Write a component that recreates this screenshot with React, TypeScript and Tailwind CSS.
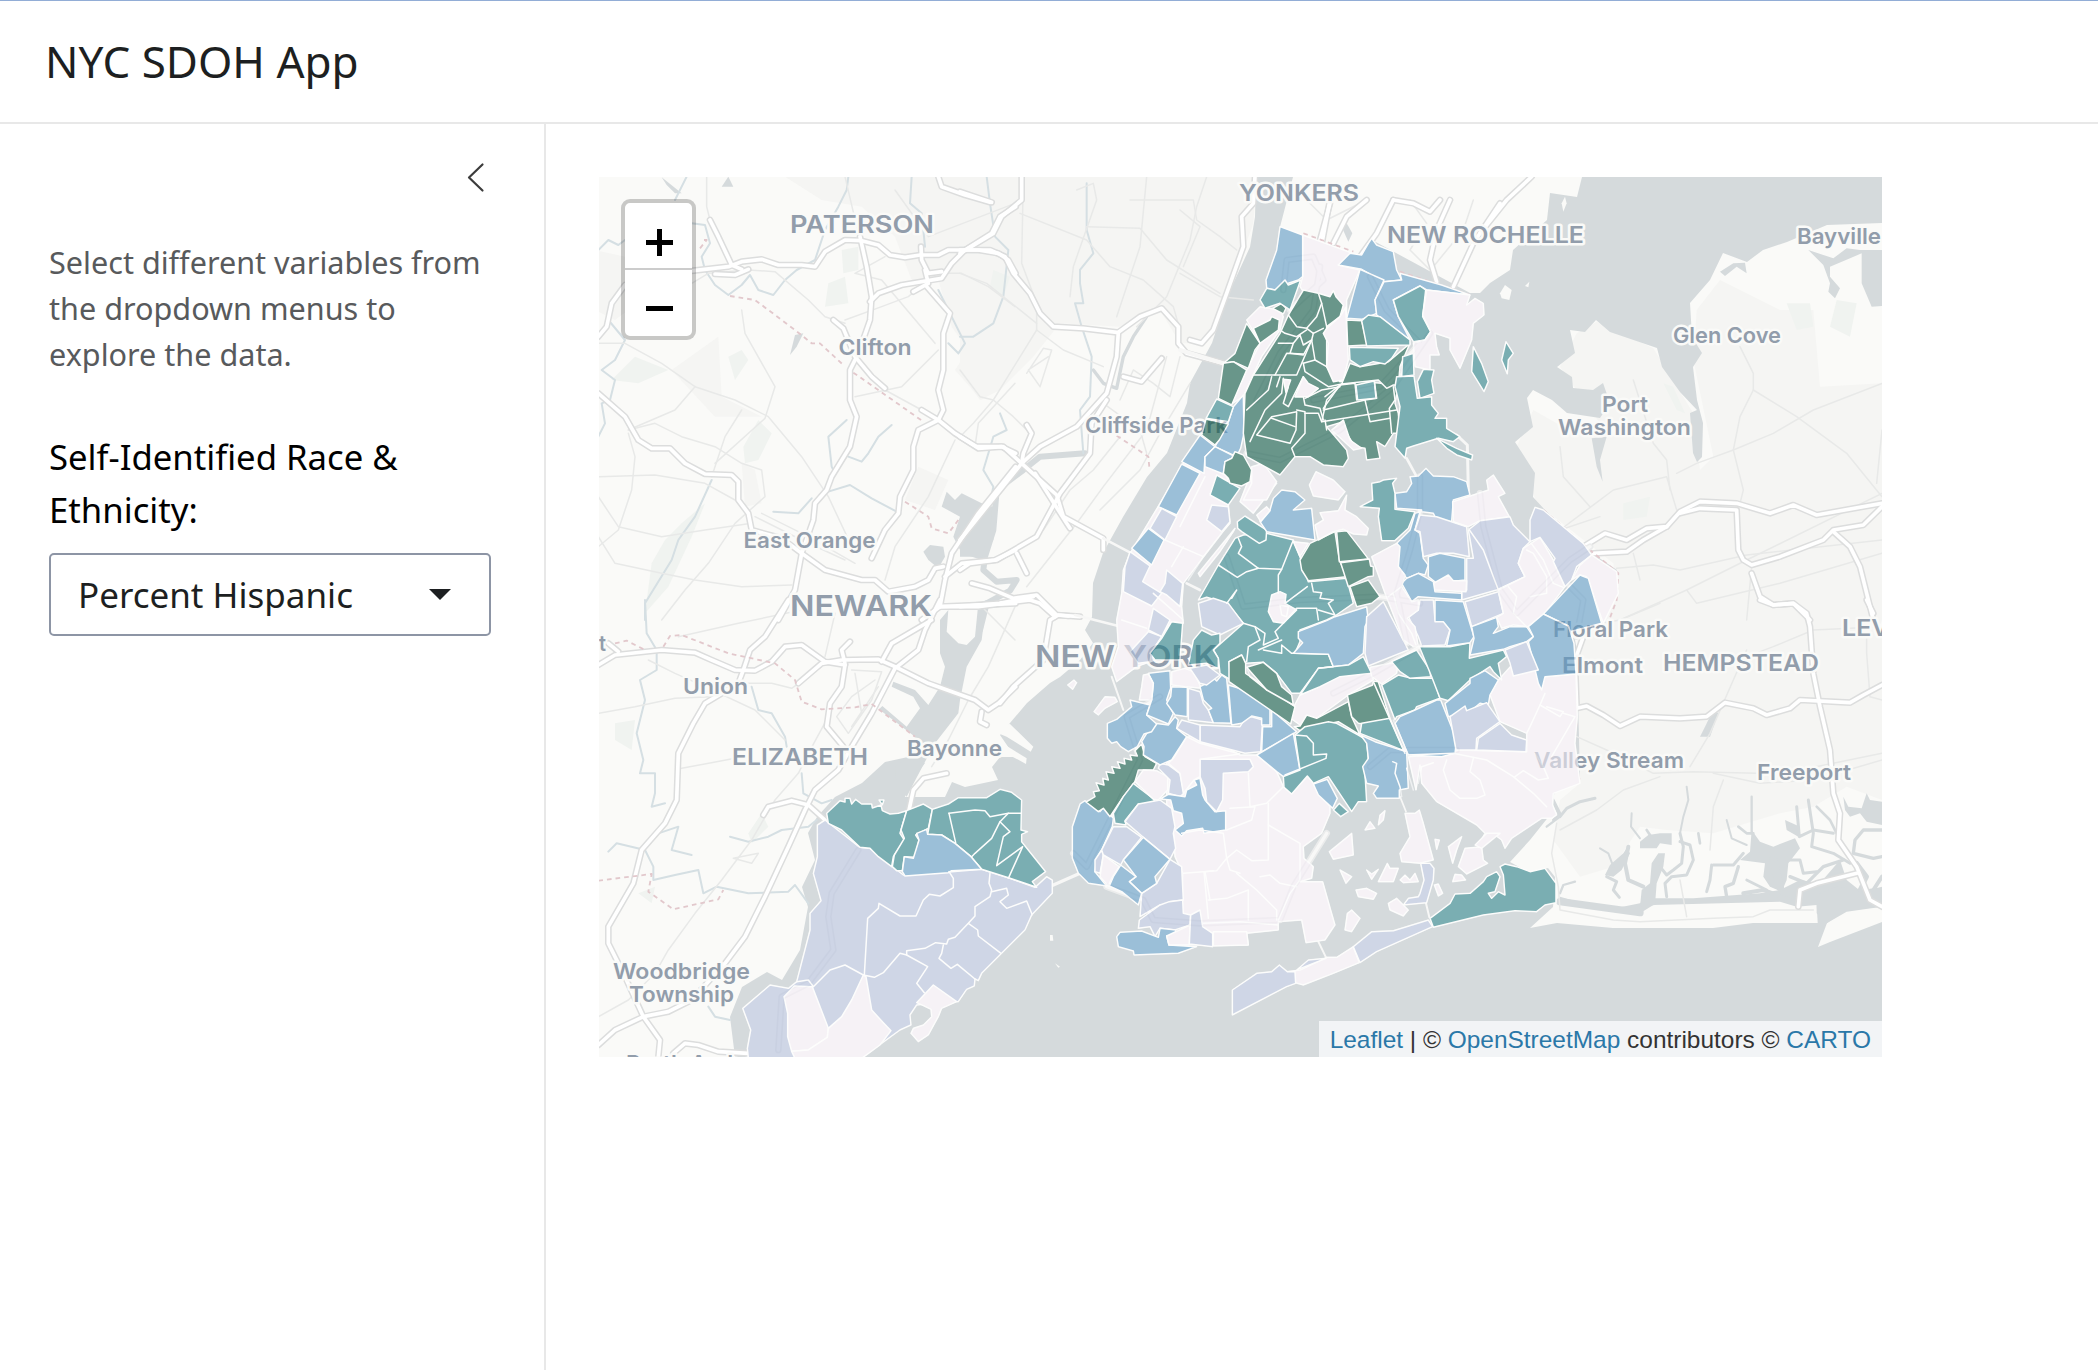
import React from "react";

type Tone = "p" | "l" | "b" | "t" | "g";

// The map is split into survey sheets; each sheet has its own origin and uses thirds of a pixel.
const SHEETS: Record<string, [number, number]> = {
  A: [595, 170],
  B: [595, 600],
  C: [1000, 600],
  D: [1180, 200],
  E: [1100, 460],
  F: [1370, 450],
  G: [1300, 680],
  H: [1480, 170],
  I: [1480, 600],
  K: [960, 170],
};

const TONES: Record<Tone, string> = {
  p: "#f3edf6",
  l: "#b3bfdb",
  b: "#5c98c4",
  t: "#257c84",
  g: "#095441",
};

const REGIONS: [string, Tone, string][] = [
  // Staten Island
  ["B", "l", "667,675 690,660 795,742 825,745 925,825 1070,815 1160,808 1245,835 1320,862 1355,830 1372,840 1372,880 1310,945 1290,990 1220,1060 1160,1120 1150,1142 1140,1137 1138,1158 1115,1168 1090,1205 1060,1205 965,1215 945,1245 948,1275 915,1290 860,1330 800,1375 460,1375 457,1345 467,1290 443,1225 525,1155 580,1165 605,1145 645,990 645,940 678,902 655,820 667,770"],
  ["B", "p", "567,1190 598,1158 652,1160 700,1285 697,1312 640,1350 590,1354 578,1310 578,1240"],
  ["B", "p", "700,1285 740,1250 770,1200 805,1125 813,1130 830,1230 865,1268 888,1292 855,1335 800,1375 600,1375 590,1354 640,1350 697,1312"],
  ["B", "p", "965,1208 1015,1155 1085,1205 1040,1225 1030,1250 1000,1305 970,1325 948,1300 955,1285 985,1275 1010,1250 1008,1228 985,1217"],
  ["B", "t", "695,640 735,602 750,606 750,595 765,595 770,612 782,598 800,612 830,612 832,624 858,615 862,632 885,642 910,640 935,632 915,700 928,720 895,770 890,800 850,770 825,745 795,742 740,690 700,670"],
  ["B", "t", "935,632 985,612 1012,628 1000,685 962,705 972,720 960,772 928,770 922,812 905,812 892,800 898,765 928,715 918,690"],
  ["B", "t", "1012,628 1060,612 1090,593 1175,593 1215,568 1250,577 1280,600 1278,690 1298,695 1280,703 1280,725 1352,815 1312,845 1325,862 1245,835 1160,808 1128,770 1080,730 1040,705 998,703"],
  ["B", "b", "928,770 955,775 972,720 965,700 995,688 998,703 1040,705 1080,730 1128,770 1160,808 1070,812 1060,818 930,828 922,815"],
  ["B", "t", "852,600 867,600 862,615"],
  // Brooklyn
  ["C", "p", "500,480 545,420 600,395 720,465 770,465 830,515 850,560 875,580 925,525 945,545 990,620 990,640 965,700 910,740 912,775 940,800 935,835 900,845 968,845 992,930 1005,975 975,1020 918,1028 905,960 835,965 835,990 740,1000 745,1035 500,1035 497,1005 545,1000 545,940 548,820 525,770 520,700 500,620"],
  ["C", "b", "240,612 255,602 300,635 310,622 340,655 337,680 305,750 290,775 285,815 320,858 265,850 235,820 217,775 217,680"],
  ["C", "l", "305,750 285,780 285,815 300,820 310,765"],
  ["C", "g", "258,606 285,590 280,575 298,572 288,548 312,555 308,535 325,540 318,515 342,520 335,500 360,505 352,485 375,492 372,475 395,480 390,465 412,468 405,452 425,432 435,470 470,490 460,510 415,510 405,545 370,590 330,650 310,625 295,635"],
  ["C", "t", "400,550 465,600 440,620 415,612 375,662 378,675 345,670 340,640 370,590"],
  ["C", "p", "405,545 430,510 470,512 503,530 503,570 475,600 460,598"],
  ["C", "l", "480,490 505,495 540,520 552,580 540,590 505,580 510,540 475,505"],
  ["C", "l", "415,612 480,600 515,625 525,680 520,700 527,745 510,778 430,712 375,665"],
  ["C", "l", "340,680 380,680 425,712 370,780 362,795 310,765 305,750"],
  ["C", "p", "310,765 358,800 335,835 325,858 300,830"],
  ["C", "l", "510,778 545,800 550,900 508,905 505,915 480,915 420,950 425,880 470,850"],
  ["C", "b", "430,712 510,778 465,830 470,850 425,880 388,845 408,830 370,780"],
  ["C", "b", "362,795 408,830 388,845 425,880 415,915 365,875 328,858 340,830"],
  ["C", "l", "508,905 548,900 550,940 572,945 570,975 525,990 480,985 465,1010 450,980 415,985 418,960 480,915"],
  ["C", "b", "350,1010 360,997 425,993 475,1012 480,985 528,990 525,1005 500,1008 507,1035 590,1040 535,1060 402,1065 400,1053 355,1040"],
  ["C", "p", "500,1008 570,975 568,1035 507,1035"],
  ["C", "l", "572,945 600,930 608,980 638,1000 638,1040 568,1032"],
  ["C", "p", "640,995 740,995 745,1035 640,1038"],
  ["C", "b", "600,535 608,585 615,600 645,635 677,632 677,690 612,700 608,685 560,692 545,708 525,690 550,670 545,640 520,632 512,600 480,597 505,583 555,590 560,570 590,555 582,540"],
  ["C", "l", "600,478 750,478 760,500 745,515 670,520 668,600 650,635 620,605 615,565 600,530"],
  ["C", "p", "560,410 600,430 720,462 600,478 600,530 582,540 550,580 540,520 505,490 520,475"],
  ["C", "l", "600,375 720,380 735,355 755,350 788,360 782,455 735,460 600,425"],
  ["C", "l", "545,360 600,375 600,425 530,385"],
  ["C", "b", "465,370 505,375 525,350 535,360 530,385 560,410 515,480 480,495 430,465 432,440 425,425 440,400"],
  ["C", "b", "322,370 350,358 395,320 390,300 450,315 440,345 470,372 455,395 432,402 412,440 385,455 362,440 350,425 335,430 322,415"],
  ["C", "b", "445,220 510,212 512,265 500,300 520,340 505,372 440,345 455,300 460,250"],
  ["C", "b", "515,260 562,262 562,350 525,345 500,310 512,290"],
  ["C", "p", "430,225 445,222 460,250 455,300 418,300 425,260"],
  ["C", "p", "282,335 315,290 345,292 352,305 315,325 295,345"],
  ["C", "p", "203,255 222,240 230,248 218,268"],
  ["C", "p", "515,215 555,205 580,215 605,265 555,260 515,255"],
  ["C", "l", "565,265 600,275 610,310 625,330 640,368 565,360"],
  ["C", "b", "600,260 620,250 635,228 650,243 665,225 680,235 693,370 640,368 625,330 635,325 610,300"],
  ["C", "l", "570,205 620,195 660,225 640,240 620,255 600,250"],
  ["C", "b", "685,255 735,270 810,325 810,375 785,375 785,355 755,348 725,370 695,375"],
  ["C", "b", "815,330 890,395 875,405 770,465 785,455 788,380 815,380"],
  ["C", "b", "770,465 880,400 900,510 850,530 830,515"],
  // Western Queens
  ["E", "t", "355,315 405,235 430,225 500,220 580,240 600,290 625,365 740,355 760,430 705,468 680,480 600,510 600,545 585,580 685,583 700,620 655,625 600,700 575,700 530,640 490,607 437,610 425,585 387,605 392,660 360,640 355,595 340,570 430,490 380,430 320,412 295,420"],
  ["E", "t", "412,185 435,168 500,210 498,240 478,250 425,215 413,205"],
  ["E", "p", "515,405 540,395 558,403 555,430 590,450 550,490 520,485 505,455"],
  ["E", "p", "540,435 565,440 560,470 545,465"],
  ["E", "l", "295,430 340,415 385,430 430,490 360,525 305,500"],
  ["E", "t", "280,540 305,510 335,525 360,520 360,550 340,570 355,595 355,625 320,610 265,615"],
  ["E", "p", "580,245 625,250 600,290"],
  ["E", "g", "600,300 630,250 705,215 718,300 740,350 625,362 605,330"],
  ["E", "g", "710,215 740,212 800,290 805,297 718,305"],
  ["E", "g", "722,308 808,297 812,318 820,320 820,348 805,350 745,380"],
  ["E", "g", "750,380 805,360 840,410 815,430 770,440"],
  ["E", "b", "480,185 510,150 520,115 545,90 585,95 615,120 580,150 635,145 645,240 500,215"],
  ["E", "p", "645,195 670,180 660,158 715,152 740,105 735,150 770,170 805,205 800,225 760,222 730,208 700,215 655,240"],
  ["E", "p", "628,75 648,35 700,60 735,95 715,120 640,108"],
  ["E", "p", "470,165 500,140 510,152 482,185"],
  ["E", "b", "595,515 680,482 705,470 800,440 805,480 795,500 790,580 745,615 700,620 685,583 580,580 608,548 595,535"],
  ["E", "l", "800,470 850,425 925,570 805,618 795,580"],
  ["E", "p", "600,705 660,680 720,648 815,635 820,660 745,705 650,775 600,795 565,770"],
  ["E", "t", "655,625 745,615 790,590 815,640 720,650 660,680 600,705"],
  ["E", "g", "387,605 425,585 437,610 437,640 585,740 572,792 387,665"],
  ["E", "g", "440,622 490,607 530,640 545,680 575,705 580,735 500,690"],
  ["E", "g", "582,800 600,798 620,765 650,775 745,725 755,770 780,825 715,785 640,800 600,812"],
  ["E", "g", "742,705 818,675 820,663 835,665 870,775 810,795 775,790 755,770"],
  ["E", "p", "810,622 895,605 890,640 845,672 815,650"],
  ["G", "t", "-15,165 15,140 85,125 110,130 175,165 200,180 205,235 195,280 200,365 175,365 155,395 85,290 40,310 22,288 -25,342 -48,322 -50,290 0,270"],
  ["G", "b", "40,312 82,298 112,355 98,385 55,345"],
  ["G", "t", "100,390 118,370 145,395 122,410"],
  ["G", "t", "180,160 185,130 270,115 312,212"],
  ["G", "b", "182,165 225,185 320,215 325,325 298,330 298,355 230,355 220,340 235,318 200,310 188,260 205,235 200,190"],
  ["F", "p", "360,735 385,690 430,640 500,660 520,680 618,672 622,800 615,880 630,1000 550,1030 548,1065 560,1095 545,1105 515,1105 425,1165 405,1195 395,1170 375,1155 355,1175 325,1185 345,1150 320,1125 200,1055 155,1000 150,945 138,1020 115,920 255,910 258,900 470,905 470,850 390,815"],
  ["F", "t", "35,705 85,675 125,685 190,685 210,745 140,770 135,780 80,800 75,810"],
  ["F", "t", "65,635 140,600 180,660 182,680 120,685 90,665"],
  ["F", "t", "148,590 240,590 300,578 298,625 400,600 410,620 385,640 395,690 370,665 360,650 300,690 235,752 210,745 185,680"],
  ["F", "b", "225,760 300,700 300,685 345,662 385,690 360,735 355,765 330,760 300,785 235,800"],
  ["F", "b", "75,820 90,800 135,780 200,750 212,750 260,870 255,910 215,920 115,915"],
  ["F", "l", "240,800 285,768 290,782 350,758 390,815 320,865 318,900 258,900"],
  ["F", "l", "390,820 425,855 470,870 468,905 320,900 325,865"],
  // Eastern Queens
  ["F", "b", "75,130 110,125 125,100 120,80 145,78 168,55 190,78 250,80 290,95 300,135 250,150 245,215 200,210 190,190 155,185 155,180 80,175"],
  ["F", "t", "5,100 30,95 40,90 80,85 68,100 75,130 75,178 135,185 115,235 75,272 35,272 25,200 28,175 -30,170 8,150"],
  ["F", "b", "150,185 135,240 150,250 160,325 175,345 165,375 145,370 110,385 85,350 80,280 120,240 135,190"],
  ["F", "l", "150,195 200,200 290,230 298,320 250,310 200,310 160,320 150,245 135,240"],
  ["F", "p", "248,155 355,120 350,90 370,75 405,130 385,140 418,200 330,212 295,230 250,215"],
  ["F", "l", "295,240 330,212 420,200 430,225 480,275 460,295 445,340 465,380 380,420 275,450 275,425 290,420 290,325 310,325"],
  ["F", "b", "175,320 210,310 285,325 285,390 200,400 175,380"],
  ["F", "p", "190,400 235,375 250,392 290,392 288,425 190,420"],
  ["F", "b", "95,400 110,385 145,370 190,395 195,425 275,430 275,450 145,440 125,455"],
  ["F", "l", "285,455 385,425 400,490 305,530"],
  ["F", "l", "115,500 145,480 150,450 190,450 195,510 225,515 240,540 225,585 155,588 145,560"],
  ["F", "b", "195,450 280,455 312,560 300,578 230,588 240,540 220,515 195,515"],
  ["F", "b", "305,530 380,502 385,530 370,550 420,530 470,530 490,560 470,575 420,590 400,598 300,615 312,565"],
  ["F", "p", "5,320 80,280 90,290 85,350 105,375 95,410 125,455 145,450 145,480 112,505 135,530 145,590 130,590 100,570 45,430"],
  ["F", "p", "385,420 465,380 445,340 460,295 510,262 550,330 585,410 525,490 475,530 430,525 395,535 380,502 400,490"],
  ["F", "l", "495,172 520,180 640,280 665,315 620,350 605,390 585,410 550,335 555,325 510,262 480,275 480,210"],
  ["F", "p", "665,315 740,365 745,430 700,520 650,380 630,375 605,390 630,345"],
  ["F", "b", "630,375 655,385 695,520 600,545 595,528 520,492"],
  ["F", "b", "520,492 595,528 612,580 618,672 525,680 515,720 505,700 475,575 490,560 475,530"],
  ["F", "l", "405,600 470,575 505,660 430,678 420,640"],
  // Manhattan
  ["E", "p", "255,0 370,0 385,70 330,100 385,135 390,190 365,220 250,370 245,440 250,490 215,485 150,580 165,600 110,620 50,665 35,620 55,560 50,480 65,400 70,330 90,280 180,130"],
  ["E", "b", "245,12 300,40 230,165 175,140"],
  ["E", "l", "185,145 230,170 195,240 150,205"],
  ["E", "b", "145,205 192,240 155,315 95,265"],
  ["E", "l", "90,275 150,318 128,365 185,400 155,438 70,395 75,320"],
  ["E", "l", "200,330 248,370 240,440 200,405 180,395 195,370"],
  ["E", "l", "160,445 210,480 185,530 145,510"],
  ["E", "l", "145,515 185,530 155,575 150,605 115,610 90,575"],
  ["E", "t", "215,485 248,490 240,600 165,600 150,580 185,535"],
  ["E", "l", "335,135 385,140 390,185 365,215 320,180"],
  ["E", "p", "455,35 480,20 530,70 460,160 420,125"],
  ["E", "p", "295,340 405,205 400,215 360,275 300,350"],
  ["D", "p", "200,360 240,320 300,330 310,350 300,390 245,470 190,590 155,612 200,510 240,430"],
  ["D", "g", "220,385 270,360 275,350 298,360 295,390 240,430"],
  ["D", "g", "200,370 240,430 225,450 205,505 160,485 130,490 165,460"],
  ["D", "g", "130,490 160,485 200,510 155,615 115,595"],
  ["D", "g", "278,325 305,310 318,325 310,342"],
  ["D", "b", "190,585 192,700 182,745 170,770 105,740 145,665 160,620"],
  ["D", "t", "110,597 160,620 145,665 78,655"],
  ["D", "g", "78,657 145,672 118,720 105,735 65,705"],
  ["D", "b", "60,705 105,740 75,770 72,820 5,785"],
  ["D", "b", "105,740 165,770 135,785 130,822 75,800 75,770"],
  ["E", "t", "350,45 420,85 385,135 330,105"],
  ["D", "g", "165,755 190,765 215,810 210,845 185,858 150,850 145,835 130,820 135,785 155,775"],
  ["D", "p", "215,800 250,790 290,845 260,900 190,900 215,850"],
  // Bronx
  ["D", "p", "368,105 545,170 475,195 540,210 500,300 500,480 490,540 460,545 440,500 445,430 440,385 360,260 368,230"],
  ["D", "b", "300,80 368,105 368,230 355,240 325,250 285,270 260,265 258,240 290,150"],
  ["D", "t", "260,265 285,270 315,240 325,255 362,240 330,330 300,310 255,325 240,300"],
  ["D", "b", "475,195 510,160 545,165 565,130 575,115 590,135 640,155 650,210 665,240 610,245 545,208"],
  ["D", "b", "540,208 612,240 585,300 590,340 545,358 500,355"],
  ["D", "b", "612,245 665,240 660,220 785,255 870,285 740,270 720,258 640,300 655,350 690,420 590,345 585,300"],
  ["D", "t", "640,300 720,258 737,270 728,350 752,395 735,420 700,425 655,350"],
  ["D", "p", "740,270 870,285 860,315 885,295 910,310 912,345 880,370 875,420 840,505 810,450 810,415 765,400 770,440 778,465 750,465 750,510 705,500 700,428 735,420 752,395 728,345"],
  ["D", "g", "325,345 370,270 415,280 450,290 460,272 468,290 490,315 480,350 440,380 440,500 480,545 505,540 655,555 645,610 655,640 660,700 640,700 615,740 590,725 600,775 560,780 555,745 525,740 500,700 490,665 440,680 500,750 505,775 490,800 430,795 390,770 345,770 300,825 200,770 190,700 195,580 220,525 300,400"],
  ["D", "p", "430,400 440,385 480,350 497,322 505,480 490,540 460,545 440,500 445,430"],
  ["D", "p", "370,530 385,550 415,565 385,590 345,590"],
  ["D", "p", "310,538 332,540 318,578"],
  ["D", "p", "455,690 490,660 510,720 545,745 520,750"],
  ["D", "g", "500,360 545,362 562,435 503,438"],
  ["D", "g", "510,490 540,500 625,485 690,430 660,500 655,555 640,555 620,565 595,540 485,552"],
  ["D", "t", "545,362 565,345 600,350 690,420 690,435 560,438"],
  ["D", "t", "508,442 655,445 635,475 615,492 580,485 540,500 510,480"],
  ["D", "t", "668,470 700,460 702,525 665,530"],
  ["D", "t", "712,545 730,508 762,510 755,540 762,580 720,595"],
  ["D", "t", "650,530 702,528 712,595 755,590 755,615 775,640 765,655 800,655 800,685 840,710 820,725 775,715 700,738 680,745 675,775 645,740 660,620 645,560"],
  ["D", "t", "770,715 830,745 878,765 875,780 830,765 800,745"],
  ["D", "t", "880,440 905,490 925,545 912,575 875,515"],
  ["D", "t", "528,555 583,543 588,595 533,600"],
  ["H", "t", "78,515 100,550 85,570 82,612 65,570"],
  // Rockaways and Jamaica Bay
  ["G", "t", "390,715 450,670 465,642 510,640 550,605 560,590 590,575 600,590 585,635 565,640 575,655 595,635 615,645 610,585 600,560 615,552 650,560 690,575 735,565 768,610 768,668 735,675 710,695 645,692 550,705 400,742"],
  ["G", "p", "0,870 80,832 110,832 160,800 178,848 100,880 10,915 -45,900 -40,875"],
  ["G", "l", "160,800 215,755 280,752 385,720 398,740 230,815 180,848"],
  ["C", "l", "697,1170 770,1120 815,1115 838,1095 862,1115 885,1115 887,1150 860,1160 697,1245"],
  ["C", "l", "890,1110 925,1080 978,1075"],
  ["G", "p", "315,400 345,400 358,390 370,430 400,540 360,550 305,545 300,520 330,470"],
  ["G", "l", "362,550 390,550 402,565 400,600 380,668 310,675 325,655 355,650 360,640 372,600"],
  ["G", "p", "88,515 155,460 160,525 100,538"],
  ["G", "p", "475,560 495,505 545,500 550,540 563,550 500,582"],
  ["G", "p", "525,495 560,460 600,460 545,505"],
  ["G", "p", "168,630 200,625 230,640 220,658 175,650"],
  ["G", "p", "135,750 142,700 155,690 180,715 155,755"],
  ["G", "p", "265,670 290,655 325,690 310,708 270,690"],
  ["G", "p", "445,500 485,470 470,510 458,550"],
  ["G", "p", "235,605 262,550 270,565 295,565 280,605"],
  ["G", "p", "300,600 315,585 330,600 345,580 355,605 310,608"],
  ["G", "p", "200,570 215,582 235,568 215,598"],
  ["G", "p", "120,570 155,590 138,610"],
  ["G", "p", "195,450 210,425 225,445"],
  ["G", "p", "235,435 240,405 255,392 250,420"],
  ["G", "p", "458,605 465,583 485,585 497,600"],
  ["G", "p", "403,615 415,612 428,640 415,648"],
  ["G", "p", "405,478 418,480 410,508"],
];

// Interior tract borders
const BORDERS: [string, string][] = [
  ["B", "605,1145 640,1140 655,1160 705,1110 750,1095 805,1125"],
  ["B", "808,1125 818,955 850,925 852,910 915,948 963,948 985,900 1003,883 1035,888 1075,863 1075,835 1062,815"],
  ["B", "805,1125 838,1132 865,1118 915,1060 935,1065 998,1100 965,1150 988,1178"],
  ["B", "935,1065 935,1052 990,1045 1022,1028 1055,1032 1060,1018 1080,1012 1120,970 1140,948 1140,920 1185,890 1190,870 1182,850 1185,820"],
  ["B", "1045,1035 1040,1060 1032,1075 1068,1105 1087,1093 1140,1137"],
  ["B", "1120,970 1148,990 1150,1008 1218,1060"],
  ["B", "1190,875 1235,865 1240,885 1215,905 1235,925 1295,903 1312,945"],
  ["B", "1062,640 1140,630 1170,632 1185,650 1240,640 1278,640"],
  ["B", "1062,640 1082,728"],
  ["B", "1240,640 1215,665 1190,715 1140,760 1130,770"],
  ["B", "1215,665 1245,695 1225,710 1205,797 1283,740 1240,835"],
  ["C", "545,700 600,690 670,700 680,775 650,812 550,820"],
  ["C", "612,815 625,955"],
  ["C", "680,690 755,660 765,620 690,625"],
  ["C", "745,520 750,620 800,610 850,560"],
  ["C", "805,610 805,780 755,782 710,750 680,775 690,810 720,820"],
  ["C", "805,675 900,730 900,840 870,880 835,960"],
  ["C", "710,820 770,870 830,930 830,960"],
  ["C", "780,830 810,825 840,850 890,860"],
  ["C", "625,900 680,895 745,870 745,960"],
  ["C", "610,970 720,965 835,975"],
  ["C", "630,900 615,815 640,812"],
  ["E", "195,240 310,290 365,220"],
  ["E", "250,260 215,320"],
  ["E", "315,50 240,200"],
  ["E", "65,480 140,505"],
  ["E", "310,290 265,360"],
  ["E", "160,400 205,440 250,480"],
  ["E", "415,235 425,260 415,280 475,325 545,328 580,240"],
  ["E", "355,315 412,352 440,335 475,325"],
  ["E", "545,328 535,345 535,400"],
  ["E", "555,430 622,380"],
  ["E", "380,430 410,390 395,415"],
  ["E", "430,490 465,500 480,540 445,560 440,605"],
  ["E", "465,500 495,520 490,555 535,535 525,515 550,490 590,445 650,445 655,480"],
  ["E", "635,370 640,395 665,398 660,415 700,420 685,430 705,465 655,450"],
  ["E", "490,570 545,580 545,555 575,580 585,580"],
  ["E", "475,570 545,540"],
  ["E", "655,625 700,620"],
  ["E", "500,690 450,650 440,622"],
  ["E", "820,665 915,880"],
  ["G", "-15,165 20,168 40,190 40,225 80,222 78,235 -45,285"],
  ["G", "280,120 325,228"],
  ["G", "278,245 290,250 285,280 300,320 305,350"],
  ["G", "320,265 340,330"],
  ["G", "355,310 365,260 400,248"],
  ["G", "440,240 430,270 450,330 480,355 530,355 555,345 540,300 510,275 520,235"],
  ["G", "320,225 460,220 560,240 640,290 700,340 740,380"],
  ["G", "645,290 670,272 715,300 745,295 730,260 705,220"],
  ["F", "525,730 510,765 480,830 470,850"],
  ["F", "510,765 570,800 580,785 530,770"],
  ["F", "580,790 615,800 545,920"],
  ["F", "415,410 440,440 430,490 470,530"],
  ["F", "480,440 530,430 530,380 490,310 470,300"],
  ["F", "480,275 520,330 550,400 580,412"],
  ["F", "295,235 340,300 385,420"],
  ["F", "55,440 95,410"],
  ["F", "70,430 85,490 125,550 140,590"],
  ["D", "325,345 350,380 380,385 410,350 425,310 415,280"],
  ["D", "425,310 440,380"],
  ["D", "380,385 400,400 430,385"],
  ["D", "300,390 315,400 350,410 380,390"],
  ["D", "295,430 340,430 360,405 370,435 395,420 400,400"],
  ["D", "340,430 330,460 370,465 395,420"],
  ["D", "220,525 350,525 395,420"],
  ["D", "285,525 320,460 370,462"],
  ["D", "395,420 405,480 440,500"],
  ["D", "370,490 405,480"],
  ["D", "370,490 375,515 445,560 485,552"],
  ["D", "275,530 265,570 200,630"],
  ["D", "310,535 305,580 255,630 210,725"],
  ["D", "290,560 300,530"],
  ["D", "370,530 325,620 310,610 325,560"],
  ["D", "345,590 370,590 375,615 420,625 430,660"],
  ["D", "230,705 275,650 350,635 348,690 330,730 230,705"],
  ["D", "275,655 345,680"],
  ["D", "350,630 375,635 375,700 335,745 345,770"],
  ["D", "375,640 415,640 425,665 650,630"],
  ["D", "430,625 480,555 525,550 530,600"],
  ["D", "430,630 555,600 570,665 630,655"],
  ["D", "435,590 480,555"],
  ["D", "425,665 440,600 485,552"],
  ["D", "435,660 440,690"],
  ["D", "640,560 645,600 628,625 635,700"],
  ["D", "583,543 590,595 555,600"],
  ["D", "375,595 425,570 480,560"],
];

const URBAN: [string, string][] = [
  ["A", "570,20 1260,20 1260,560 1160,690 1080,600 1120,540 1070,470 1030,330 950,330 900,200 800,110 680,90"],
  ["K", "0,20 890,20 880,160 830,300 780,440 740,520 660,520 600,420 480,470 300,460 220,560 120,660 60,690 0,610"],
  ["A", "230,600 370,500 380,680 500,740 360,740"],
  ["A", "0,240 90,260 100,420 60,450 0,420"],
  ["A", "970,890 1060,930 1020,1020 930,990"],
  ["A", "440,880 480,900 500,1000 450,1010"],
  ["H", "240,590 290,490 350,455 520,535 640,730 660,900 700,860 640,570 650,420 720,330 900,420 1000,420 1020,650 1206,640 1206,1350 420,1350 400,1180 170,1000 110,830 160,720 230,760 360,760"],
  ["I", "290,0 1206,0 1206,600 1100,560 1000,620 900,640 700,700 560,690 480,680 400,800 300,830 220,720 240,600 300,550"],
];

const WATER: [string, string][] = [
  ["B", "1060,30 1035,60 1035,160 1050,200 1035,260 1000,315 960,270 895,245 890,260 955,290 975,325 935,380 862,318 852,328 960,410 940,470 900,500 905,560 935,590 990,485 1020,430 1090,340 1095,300 1115,200 1160,120 1170,40 1175,0 1150,10 1140,110 1115,135 1090,130 1055,95"],
  ["A", "1040,1010 1055,965 1080,990 1100,970 1160,1000 1185,1010 1180,1140 1160,1170 1100,1150 1075,1100 1095,1040"],
  ["A", "985,1145 1005,1125 1045,1130 1050,1160 1030,1195 1000,1170"],
  ["K", "0,975 30,990 60,1000 100,1010 100,1110 60,1160 0,1160"],
  ["H", "1206,240 1140,240 1100,235 1060,265 985,240 1030,285 1050,340 1045,365 1065,385 1080,355 1050,320 1050,290 1145,250 1145,340 1175,410 1206,408"],
  ["H", "335,805 380,800 360,870 368,935 350,890"],
  ["H", "720,305 760,280 795,278 800,310 770,290 735,318"],
  ["A", "585,555 600,495 625,490 605,530"],
  ["A", "200,22 260,70 240,70 215,45"],
  ["A", "380,50 400,20 415,50"],
  ["I", "240,905 480,940 520,915 900,905 950,920 1010,915 1010,940 1040,970 1100,930 1206,920 1206,860 1150,880 1100,840 1080,780 1020,850 960,840 900,870 840,880 640,895 500,895 480,910 380,930 240,890"],
  ["I", "815,690 840,725 880,740 945,715 960,745 925,790 920,840 905,875 870,860 850,830 855,790 780,780 810,755"],
  ["I", "1090,590 1105,620 1145,625 1160,580 1170,600 1206,605 1206,675 1160,665 1140,640 1110,650 1095,630"],
  ["I", "480,725 505,705 540,700 575,700 575,735 540,730 530,745 480,745"],
  ["I", "660,410 700,330 715,340 690,410"],
  ["I", "375,825 390,795 430,760 440,745 450,760 425,810 400,830"],
  ["I", "480,920 485,870 510,850 515,790 535,760 555,760 550,800 530,850 525,915"],
  ["I", "1010,915 1020,880 1070,860 1140,870 1206,862 1206,920 1100,935 1040,970 1015,1000"],
  ["I", "915,660 960,680 955,710 920,690"],
  ["D", "487,85 500,70 517,100 505,125"],
];

const INLETS: [string, string, number][] = [
  ["K", "375,850 240,860 190,900 110,960 100,1080 75,1160 70,1200 110,1235 170,1230 150,1262 80,1300 60,1380", 18],
  ["K", "560,440 520,500 490,560 470,655 430,640 400,600", 10],
  ["I", "240,905 480,938", 22],
  ["I", "455,640 453,680 480,715", 6],
  ["I", "445,740 435,790 445,840 490,860", 12],
  ["I", "380,830 410,845 400,870 418,892", 9],
  ["I", "360,745 385,760 400,800", 6],
  ["I", "620,560 625,600 610,650 600,700", 6],
  ["I", "600,700 610,740 605,790 580,810 560,825 540,800", 9],
  ["I", "600,725 630,735 640,780 620,825 575,830 555,850 560,890", 9],
  ["I", "500,690 520,720", 8],
  ["I", "655,700 660,730", 8],
  ["I", "815,590 815,700", 7],
  ["I", "740,660 755,715 800,735", 6],
  ["I", "775,680 800,700 820,700", 8],
  ["I", "700,795 760,795 790,760", 9],
  ["I", "695,795 690,840 680,875", 9],
  ["I", "740,890 735,860 760,850 775,800", 10],
  ["I", "790,880 850,870 930,900", 12],
  ["I", "950,620 958,710 1000,690 1060,700", 9],
  ["I", "985,600 1000,700 995,740 1060,760 1110,790", 9],
  ["I", "920,780 960,780 970,820 1010,815", 9],
  ["I", "1010,620 1050,660 1070,700", 8],
  ["I", "930,830 980,850 1030,800 1090,780", 10],
  ["I", "1206,690 1150,690 1125,720 1120,760 1180,775 1206,770", 10],
  ["I", "1130,790 1160,830 1140,870", 14],
  ["I", "1206,830 1180,870", 12],
  ["I", "800,840 860,870", 8],
  ["I", "240,650 260,625 300,605 345,595", 9],
  ["I", "220,600 240,640 220,660", 8],
  ["I", "240,880 250,855 285,845", 7],
  ["I", "880,780 900,860", 24],
  ["G", "760,370 780,410 740,440", 7],
];

const STREAMS: [string, string][] = [
  ["A", "240,90 275,20"],
  ["A", "290,160 330,165 345,220 320,260 330,300 360,345 400,375 440,345 465,315 490,360 535,375 570,330 605,300 660,270 690,180 730,110 755,60 760,20"],
  ["A", "10,240 40,210 70,225 90,210"],
  ["A", "40,450 90,510 60,570 20,600 60,630 45,690 20,700 30,760 10,800"],
  ["A", "755,750 700,800 710,890 720,910"],
  ["A", "890,765 850,800 820,850 800,875 760,860"],
  ["A", "535,1025 610,1030 650,985"],
  ["A", "700,965 765,945 830,985 905,1025"],
  ["A", "350,930 300,1040 250,1110 230,1170 150,1300 150,1350"],
  ["B", "150,0 155,100 185,150 185,210 135,240 150,300 125,400 145,480 135,520 180,520 180,580 170,620 210,610"],
  ["B", "470,260 490,330 530,340 570,410 575,440"],
  ["B", "620,520 625,580 680,610 710,600"],
  ["B", "40,755 65,730 150,750 175,800 175,840 240,825 310,810 325,880 365,860 460,880 580,875 600,855 640,910"],
  ["B", "190,700 250,680 230,750 290,765"],
  ["B", "405,710 460,725 520,710 560,690 640,680 665,660"],
  ["B", "340,1220 360,1250 405,1260"],
  ["K", "80,20 90,100 105,200 145,240 130,380 100,460 40,500 0,500"],
  ["K", "380,40 380,180 400,250 360,300 360,340 370,400 345,400 365,470 395,560 390,680 360,720 370,850"],
  ["K", "120,730 140,780 100,800 70,900 100,950 90,1000"],
  ["A", "950,20 945,100 980,130 990,230"],
  ["A", "1030,360 1110,520 1090,550 1060,520"],
];

const MINOR: [string, string][] = [
  ["A", "335,20 335,110 345,150"],
  ["A", "290,340 340,310 460,300 540,305 640,390 690,440 750,460"],
  ["A", "750,450 860,410 940,380 1000,330"],
  ["A", "10,520 90,520 200,580 300,650 420,690 520,740 620,860 700,980 780,1150"],
  ["A", "440,420 450,490 540,650 510,745 360,880"],
  ["A", "10,920 180,915 330,940 420,990"],
  ["A", "10,980 70,1070 200,1100 330,1080 470,1060"],
  ["A", "100,790 120,860 110,960 70,1080 10,1130"],
  ["A", "100,780 180,760 260,800 360,830 440,880 500,900 510,980 420,1060 340,1180"],
  ["A", "300,650 240,720 100,780"],
  ["A", "440,720 390,800 350,920"],
  ["A", "10,1100 60,1180 200,1210 300,1230 440,1250 590,1245"],
  ["A", "480,1040 620,1110 750,1170"],
  ["A", "500,1030 640,1100 780,1180"],
  ["A", "340,1180 270,1260 200,1350"],
  ["A", "1000,310 1100,310 1180,350 1260,410"],
  ["A", "870,260 780,310 860,330 1020,520"],
  ["A", "750,20 790,190"],
  ["A", "900,60 1000,200 1260,100"],
  ["A", "870,660 980,720"],
  ["A", "1260,640 1150,760 1140,830"],
  ["A", "780,680 920,650 1030,540"],
  ["A", "870,1230 900,1130 1000,980 1080,810"],
  ["B", "10,340 120,320 240,295 350,290"],
  ["B", "450,250 530,250 590,265 680,200"],
  ["B", "160,180 240,220 330,260 480,330 570,420"],
  ["B", "250,110 430,70 620,30"],
  ["B", "260,505 420,475"],
  ["B", "610,520 540,600 470,720 380,840 300,940 220,1050 180,1120 100,1200 10,1250"],
  ["B", "720,40 690,170"],
  ["B", "1150,10 1260,120"],
  ["B", "1260,20 1180,200 1120,300 1060,420 1010,500"],
  ["B", "700,350 640,460 610,520"],
  ["B", "770,210 860,215 830,300 760,400 725,350 770,290 840,240"],
  ["B", "780,220 800,340 770,380 850,260"],
  ["B", "415,775 490,760 470,790 415,775"],
  ["K", "190,20 185,280 230,400 230,480 310,540 430,590"],
  ["K", "180,130 380,210 450,290 550,330 640,410 660,480"],
  ["K", "230,480 100,690 40,760 0,800"],
  ["K", "0,310 80,340 230,460"],
  ["K", "510,90 700,90 710,150 780,200 830,240"],
  ["K", "560,20 540,230 470,440"],
  ["K", "380,170 540,175 620,270 780,370"],
  ["K", "740,20 710,110 690,210 620,380 530,470"],
  ["K", "660,560 630,680 580,640 520,600 480,690"],
  ["K", "690,640 600,790 540,900 420,1020"],
  ["K", "620,560 560,780 430,950 350,1060 200,1250"],
  ["K", "100,690 160,740 210,790"],
  ["K", "480,800 400,900 330,960 250,1080"],
  ["K", "430,700 540,780 560,850"],
  ["K", "350,60 400,40 410,90 340,290 330,380"],
  ["K", "0,600 60,680 100,690"],
  ["K", "200,610 250,535 275,540 240,650 205,600 265,560"],
  ["H", "780,530 820,610 820,660 780,740 760,840"],
  ["H", "590,910 650,880 760,840 880,790 1000,720 1206,640"],
  ["H", "820,660 950,740 1100,850 1206,980"],
  ["H", "1206,780 1190,940"],
  ["H", "240,830 250,920 330,1010"],
  ["H", "360,1040 240,1080 400,960 560,920 590,1020"],
  ["H", "460,630 520,820 560,870 570,960"],
  ["H", "760,840 790,960 780,1000"],
  ["H", "410,1195 520,1185 600,1200 800,1155 1206,1110"],
  ["H", "420,1350 620,1260 800,1170 1206,970"],
  ["H", "620,1260 650,1300 900,1240 1206,1150"],
  ["H", "800,1350 815,1190"],
  ["H", "460,1150 480,1230"],
  ["I", "300,80 420,60 540,10"],
  ["I", "290,410 380,450 520,520 640,515 830,520 960,510 1206,460"],
  ["I", "240,690 350,630 430,570 540,530"],
  ["I", "630,500 690,400 760,240 800,150"],
  ["I", "800,170 880,140 1000,90 1206,80"],
  ["I", "730,540 700,620 690,750"],
  ["I", "620,950 600,840"],
  ["I", "230,670 215,760 235,860 240,930 400,960 480,965 700,955 820,950 870,930 1000,930"],
  ["I", "1160,60 1160,160 1170,290 1206,300"],
  ["I", "700,520 840,550 1000,540 1206,480"],
  ["D", "0,220 120,290 220,300"],
  ["D", "380,0 440,60 560,0"],
  ["D", "690,0 740,70 690,150 750,210"],
  ["D", "880,0 850,90 760,200"],
  ["D", "0,30 60,80 10,200"],
];

const MAJOR: [string, string][] = [
  ["A", "345,150 370,200 410,285 440,298"],
  ["A", "270,305 400,290 440,275 500,268 550,285 620,285 660,290 690,245 750,210 800,212 850,225 885,255 930,262 975,255 1030,255 1060,240 1150,240 1210,250 1240,270 1262,310"],
  ["A", "360,312 420,315 460,298"],
  ["A", "10,500 35,470 50,400 90,345"],
  ["A", "10,670 90,740 130,810 170,835 225,835 270,880 330,912 410,915 430,935 430,990 460,1030 470,1080 560,1105 620,1150 690,1200 800,1230 840,1230 880,1265 960,1250 1000,1230 1020,1195 1045,1190"],
  ["A", "795,200 815,290 830,380 825,450 790,550 765,600 765,690 785,740 765,830 710,920 695,960 660,1000 655,1050 620,1150 600,1260 550,1350"],
  ["A", "715,450 745,475 780,560 830,620 870,655"],
  ["A", "825,395 850,370 920,345 1040,325 1070,280 1110,240 1190,190 1215,140 1262,110"],
  ["A", "978,230 980,270 1000,310 1040,305"],
  ["A", "955,365 1000,340 990,300"],
  ["A", "995,350 1065,430 1045,490 1045,600 1030,660 1045,720 1030,750 970,780 955,830 955,900 915,980 910,1030 870,1080 830,1165"],
  ["A", "980,720 1030,750 1080,790 1150,835 1220,830 1262,850"],
  ["A", "1030,20 1040,50 1110,75 1185,97"],
  ["A", "1262,890 1150,1030 1070,1150 1050,1230 1035,1310 980,1350"],
  ["A", "1050,1220 1100,1180 1200,1170 1262,1140"],
  ["A", "1035,1310 1150,1310 1262,1295"],
  ["B", "580,0 510,110 465,150 445,210 430,250 330,310 295,370 250,460 245,600 210,670 140,750 115,850 40,980 40,1030 90,1130 145,1250 195,1320 190,1371"],
  ["B", "10,195 60,165 200,150 300,158 350,180 420,210 480,212 530,185 570,140 620,135 690,185 750,195"],
  ["B", "610,250 680,190 740,180 850,178 900,200 1000,250 1140,300 1180,330 1210,310 1262,260"],
  ["B", "750,190 740,150 765,125"],
  ["B", "750,195 740,260 705,310 695,380 745,440"],
  ["B", "1035,0 990,90 970,150 900,205 830,340 770,440 730,510 660,570 630,630 580,740 510,890 450,1010 390,1090 290,1200 220,1235 145,1250 60,1290 10,1335"],
  ["B", "1010,60 890,130 860,185"],
  ["B", "505,645 520,620 590,602 640,615 690,660"],
  ["B", "940,640 955,570 985,535 1055,520"],
  ["B", "1160,335 1155,365 1175,375"],
  ["B", "235,1360 270,1330 310,1335 370,1355 460,1360"],
  ["B", "40,130 70,155"],
  ["B", "1035,20 1262,10"],
  ["K", "0,65 95,97"],
  ["K", "185,20 185,90 125,140 100,190 0,250"],
  ["K", "0,240 90,240 135,260 160,310 210,370 240,430 280,470 370,475 470,487"],
  ["K", "885,20 880,100 845,140 850,230 800,370 760,480 725,520 690,510"],
  ["K", "790,580 680,550 655,520 655,470 605,415 540,440 475,487 470,560 440,670 350,770 240,830 185,880 0,1110"],
  ["K", "490,620 545,635 605,565"],
  ["K", "0,800 50,830 130,830 185,880 290,975 310,1040 430,1105 430,1140"],
  ["K", "200,765 215,790 190,850 185,880"],
  ["K", "440,690 395,760 390,850 300,970 230,1100 110,1170 30,1180 0,1200"],
  ["K", "170,1150 200,1210"],
  ["K", "35,1240 90,1255 160,1285 230,1275 290,1335 360,1340"],
  ["K", "0,1310 120,1300 220,1280"],
  ["K", "225,910 320,1060 330,1075"],
  ["K", "1110,100 1080,210"],
  ["D", "450,0 420,160"],
  ["D", "560,0 500,50 460,130"],
  ["D", "640,0 590,100 540,170"],
  ["D", "640,0 700,10 750,35 780,0"],
  ["D", "810,0 770,90 750,180 770,245"],
  ["D", "960,10 880,130 820,260"],
  ["H", "0,190 80,90 155,20"],
  ["H", "310,1130 375,1090 440,1110 500,1075 560,1070 600,1025 660,995 770,1000 870,1030 940,1005 1010,1035 1206,1000"],
  ["H", "340,1150 440,1145 490,1110 560,1070"],
  ["H", "600,1030 660,1015 770,1020 775,1140 790,1170 815,1185 900,1160 1030,1110 1060,1080 1150,1065 1206,1010"],
  ["H", "1060,1085 1110,1130 1140,1190 1180,1350"],
  ["H", "815,1210 840,1280 880,1305 940,1300 990,1350"],
  ["I", "840,0 880,15 940,10 980,40 990,80 1000,220 1020,320 1050,450 1060,580 1080,640 1075,720 1130,800 1170,900 1206,920"],
  ["I", "1160,0 1180,40"],
  ["I", "290,325 320,318 370,345 420,378 480,350 600,355 680,350 735,308 820,325 860,345 930,325 960,300 1110,308 1150,285 1206,255"],
  ["I", "955,920 960,870 1010,850 1130,820"],
  ["I", "290,320 285,180 310,110"],
  ["C", "0,310 40,260 130,180 150,60 175,45 205,48"],
  ["C", "0,10 90,0 120,10 165,50"],
];

const FAINT: [string, string][] = [
  ["B", "790,750 710,880 700,950 715,1050 640,1150 560,1190 550,1350"],
  ["D", "310,270 320,180 400,170 430,240 330,330"],
  ["D", "570,230 620,330 720,430 600,560 400,600"],
  ["D", "200,760 300,780 480,690 640,560 750,400"],
  ["D", "230,600 300,460 400,330 420,200"],
  ["C", "220,760 260,800 330,660 420,480 380,350 480,290"],
  ["C", "320,860 430,900 460,960 600,970 840,960 880,860 980,700"],
  ["E", "380,290 430,440 600,420 840,410 960,430"],
  ["E", "700,700 820,640 960,560"],
  ["F", "150,80 150,180 120,300 80,430 110,580"],
  ["F", "330,130 340,230 390,420 440,490 600,330 660,290"],
  ["F", "600,410 640,450 620,560"],
  ["F", "0,950 60,900 260,900"],
];

const DASHES: [string, string][] = [
  ["A", "315,235 335,210 320,210"],
  ["A", "405,378 480,390 600,480 650,520 675,520 745,585"],
  ["A", "775,608 850,660 985,755"],
  ["A", "930,995 1000,1040 1010,1075 1060,1090 1090,1050"],
  ["B", "60,130 95,122 150,150"],
  ["B", "205,140 225,108 260,105 400,160 540,190 600,240 620,305 680,328 780,322 830,312 960,410"],
  ["B", "10,842 170,822 160,875 235,928 370,898 385,870"],
  ["K", "470,797 565,860 568,892"],
  ["K", "1030,190 1180,245"],
  ["D", "660,215 870,285"],
  ["F", "520,180 660,300 745,370 740,450 710,530"],
  ["F", "620,820 612,880 630,1000"],
];

const SPECKS: [string, string][] = [
  ["A", "445,830 490,750 530,790 490,870 450,880"],
  ["A", "400,560 440,540 460,570 420,630"],
  ["A", "700,340 750,320 760,400 690,410"],
  ["A", "210,1110 260,1060 330,1000 290,1100 220,1250 150,1330 170,1180"],
  ["A", "740,240 790,230 790,300 745,310"],
  ["A", "120,560 220,600 130,640 50,630"],
  ["B", "60,370 120,360 110,450 60,420"],
  ["B", "130,880 180,860 170,910"],
  ["B", "460,700 500,640 520,680 470,730"],
  ["K", "100,300 150,320 130,380 90,350"],
  ["H", "550,640 580,650 615,730 590,720"],
  ["H", "920,400 990,400 1000,470 950,480"],
  ["H", "1070,390 1130,400 1110,500 1050,470"],
  ["H", "430,1000 510,980 500,1040 430,1050"],
];

const LABELS: [string, number, number, number, number][] = [
  ["PATERSON", 790, 144, 232.7, 24],
  ["Clifton", 838.5, 73, 354.5, 22],
  ["East Orange", 743.5, 132, 547.6, 22],
  ["NEWARK", 790, 142, 615.7, 29],
  ["Union", 683, 65, 694, 22],
  ["ELIZABETH", 732, 136, 765, 23.5],
  ["Bayonne", 907, 95, 756.3, 22],
  ["Woodbridge", 613, 137, 979.3, 22],
  ["Township", 629, 105, 1002, 22],
  ["Perth Amboy", 626, 142, 1070.5, 22],
  ["t", 599, 7, 650.5, 22],
  ["YONKERS", 1239, 120, 201.3, 23],
  ["NEW ROCHELLE", 1387, 197, 243, 23],
  ["Bayville", 1797, 84, 244, 22],
  ["Glen Cove", 1673, 108, 342.6, 22],
  ["Port", 1602, 46, 412, 22],
  ["Washington", 1558, 133, 434.6, 22],
  ["Cliffside Park", 1085, 143, 433, 22],
  ["NEW YORK", 1035, 182, 667, 30],
  ["Floral Park", 1553, 115, 637, 22],
  ["Elmont", 1562, 81, 673, 22],
  ["HEMPSTEAD", 1663, 156, 671, 23],
  ["LEVITTOWN", 1842, 150, 635.7, 22.5],
  ["Valley Stream", 1534, 150, 768, 22],
  ["Freeport", 1757, 94, 780, 22],
];

const OPEN_WATER =
  "1256,177 1255,217 1250,247 1227,297 1212,343 1190,383 1187,403 1167,453 1147,477 1123,517 1103,553 1093,583 1092,617 1085,630 1093,643 1080,660 1060,677 1050,683 1027,703 1010,723 1000,735 1015,757 1000,757 992,767 998,780 965,787 952,782 945,797 905,797 907,787 925,763 908,757 885,762 862,783 835,797 817,817 808,833 815,860 802,887 808,907 800,950 782,980 767,972 742,987 730,1017 735,1057 1882,1057 1882,922 1830,942 1818,947 1827,923 1813,923 1753,923 1713,928 1613,928 1557,923 1530,928 1553,907 1555,877 1548,868 1530,873 1510,862 1530,840 1550,815 1553,800 1555,790 1580,780 1577,650 1575,640 1610,600 1617,570 1592,553 1545,510 1533,497 1535,473 1515,442 1533,427 1527,398 1533,390 1552,400 1567,413 1600,418 1610,403 1603,383 1593,390 1573,388 1572,377 1557,367 1575,353 1570,330 1585,332 1596,320 1610,332 1657,348 1662,367 1680,392 1697,410 1690,413 1693,453 1697,462 1702,457 1703,423 1697,400 1693,367 1702,353 1692,337 1690,303 1710,280 1723,253 1747,262 1763,250 1787,242 1827,225 1882,223 1882,177 1582,177 1577,197 1550,193 1547,220 1513,250 1510,270 1490,283 1480,293 1470,293 1372,240 1362,257 1302,235 1280,227 1293,177";

const BRIDGES: [string, string, number][] = [
  ["C", "155,857 240,820", 10],
  ["C", "225,45 355,78", 8],
  ["C", "335,230 370,330", 6],
  ["K", "430,1105 515,1150", 8],
  ["D", "130,490 0,450", 12],
  ["D", "680,775 710,830", 8],
  ["D", "830,705 862,735 865,870", 9],
  ["E", "260,370 300,390", 8],
  ["G", "55,785 78,832", 6],
  ["G", "300,350 318,395", 5],
  ["G", "378,670 388,712", 6],
];

function at(sheet: string) {
  const [x, y] = SHEETS[sheet];
  return `translate(${x} ${y}) scale(0.33333)`;
}

function Lines({ data, stroke, width, dash }: { data: [string, string][]; stroke: string; width: number; dash?: string }) {
  return (
    <g fill="none" stroke={stroke} strokeWidth={width} strokeDasharray={dash} strokeLinejoin="round" strokeLinecap={dash ? "butt" : "round"}>
      {data.map(([s, p], i) => (
        <polyline key={i} transform={at(s)} points={p} />
      ))}
    </g>
  );
}

function Areas({ data, fill }: { data: [string, string][]; fill: string }) {
  return (
    <g fill={fill}>
      {data.map(([s, p], i) => (
        <polygon key={i} transform={at(s)} points={p} />
      ))}
    </g>
  );
}

function CityMap() {
  return (
    <svg viewBox="599 177 1283 880" className="block h-full w-full">
      <rect x="599" y="177" width="1283" height="880" fill="#fafaf8" />
      <Areas data={URBAN} fill="#f5f5f3" />
      <Areas data={SPECKS} fill="#f0f3f0" />
      <polygon points={OPEN_WATER} fill="#d5dadc" />
      <Areas data={WATER} fill="#d5dadc" />
      <g fill="none" stroke="#d5dadc" strokeLinejoin="round" strokeLinecap="round">
        {INLETS.map(([s, p, w], i) => (
          <polyline key={i} transform={at(s)} points={p} strokeWidth={w} />
        ))}
      </g>
      <Lines data={STREAMS} stroke="#d5dfe3" width={6} />
      <g fill="#fafaf8">
        <polygon transform={at("C")} points="0,375 30,372 100,440 92,455 20,410 0,402" />
        <polygon transform={at("C")} points="0,425 80,475 78,492 0,450" />
        <polygon transform={at("H")} points="60,370 75,345 95,360 88,390 65,385" />
        <polygon transform={at("H")} points="245,100 255,80 260,100 250,125" />
        <polygon transform={at("H")} points="135,348 148,335 145,352" />
        <polygon transform={at("C")} points="150,1005 158,1005 160,1022 150,1022" />
        <polygon transform={at("C")} points="165,1090 180,1100 175,1103" />
        <polygon transform={at("I")} points="865,800 885,790 890,830 875,840" opacity="0" />
      </g>
      <Lines data={MINOR} stroke="#e8e9e8" width={4.5} />
      <Lines data={MAJOR} stroke="#dcdddd" width={20} />
      <Lines data={MAJOR} stroke="#ffffff" width={11} />
      <g fill="none" stroke="#f7f7f6" strokeLinecap="round" strokeLinejoin="round">
        {BRIDGES.map(([s, p, w], i) => (
          <polyline key={i} transform={at(s)} points={p} strokeWidth={w} />
        ))}
      </g>
      <Lines data={DASHES} stroke="#e2c8cc" width={5.5} dash="14 12" />
      <g fill="#fafaf8" stroke="#fafaf8" strokeWidth={3}>
        {REGIONS.map(([s, , p], i) => (
          <polygon key={i} transform={at(s)} points={p} />
        ))}
      </g>
      <Lines data={FAINT} stroke="#ebecec" width={20} />
      <Lines data={FAINT} stroke="#f8f8f7" width={10} />
      <g
        fill="#929dab"
        stroke="#fafaf8"
        strokeWidth={5}
        strokeLinejoin="round"
        paintOrder="stroke"
        fontWeight={600}
        className="font-[Inter,'Open_Sans',sans-serif]"
      >
        {LABELS.map(([t, x, w, y, size]) => (
          <text key={t} x={x} y={y} fontSize={size} textLength={w} lengthAdjust="spacingAndGlyphs">
            {t}
          </text>
        ))}
      </g>
      <g opacity={0.6} strokeLinejoin="round">
        {REGIONS.map(([s, tone, p], i) => (
          <polygon key={i} transform={at(s)} points={p} fill={TONES[tone]} stroke="#ffffff" strokeWidth={4.5} />
        ))}
        <Lines data={BORDERS} stroke="#ffffff" width={4.5} />
      </g>
    </svg>
  );
}

export default function App() {
  return (
    <div className="flex h-[1370px] w-[2098px] flex-col overflow-hidden bg-white font-['Noto_Sans','Open_Sans',sans-serif]">
      <header className="flex h-[124px] shrink-0 items-center border-t border-b-2 border-t-[#92add6] border-b-[#e8e8e8] pb-[2px] pl-[45px]">
        <h1 className="text-[44px] leading-none text-[#1d1f21]">NYC SDOH App</h1>
      </header>
      <div className="flex min-h-0 flex-1">
        <aside className="flex w-[546px] shrink-0 flex-col border-r-2 border-[#e8e8e8] pl-[49px]">
          <button aria-label="Collapse sidebar" className="mt-[38px] ml-[417px] h-[31px] w-[20px]">
            <svg viewBox="0 0 20 31" className="h-full w-full" fill="none" stroke="#3c3c3c" strokeWidth="2.2" strokeLinecap="round" strokeLinejoin="round">
              <path d="M16.5 2.5 L3 15.5 L16.5 28.5" />
            </svg>
          </button>
          <p className="mt-[46px] w-[450px] text-[30.6px] leading-[46px] text-[#585a5c]">
            Select different variables from
            <br />
            the dropdown menus to
            <br />
            explore the data.
          </p>
          <label className="mt-[53px] block text-[34.7px] leading-[53px] text-black">
            Self-Identified Race &
            <br />
            Ethnicity:
          </label>
          <div className="mt-[17px] flex h-[83px] w-[442px] items-center justify-between rounded-[5px] border-2 border-[#8d95a5] pr-[38px] pl-[27px]">
            <span className="text-[35px] leading-none text-[#1d1f21]">Percent Hispanic</span>
            <svg viewBox="0 0 22 11" className="h-[11px] w-[22px]" fill="#1d1f21">
              <path d="M0 0 H22 L11 11 Z" />
            </svg>
          </div>
        </aside>
        <main className="pt-[53px] pl-[53px]">
          <div className="relative h-[880px] w-[1283px] overflow-hidden">
            <CityMap />
            <div className="absolute top-[22px] left-[22px] flex h-[141px] w-[75px] flex-col rounded-[9px] border-4 border-black/20 bg-white bg-clip-padding">
              <div className="flex h-[67px] items-center justify-center border-b-2 border-[#ccc] pt-[13px] pl-[2px]">
                <svg viewBox="0 0 27 27" className="h-[27px] w-[27px] fill-black">
                  <path d="M11 0 h5 v11 h11 v5 h-11 v11 h-5 v-11 h-11 v-5 h11 Z" />
                </svg>
              </div>
              <div className="flex flex-1 items-center justify-center pt-[10px] pl-[2px]">
                <div className="h-[5px] w-[27px] bg-black" />
              </div>
            </div>
            <div className="absolute right-0 bottom-0 flex h-[36px] items-center bg-[#f2f4f6] px-[11px] pt-[2px] font-['Liberation_Sans',sans-serif] text-[24.45px] whitespace-pre text-[#333]">
              <span className="text-[#2b78a8]">Leaflet</span>
              <span> | © </span>
              <span className="text-[#2b78a8]">OpenStreetMap</span>
              <span> contributors © </span>
              <span className="text-[#2b78a8]">CARTO</span>
            </div>
          </div>
        </main>
      </div>
    </div>
  );
}
